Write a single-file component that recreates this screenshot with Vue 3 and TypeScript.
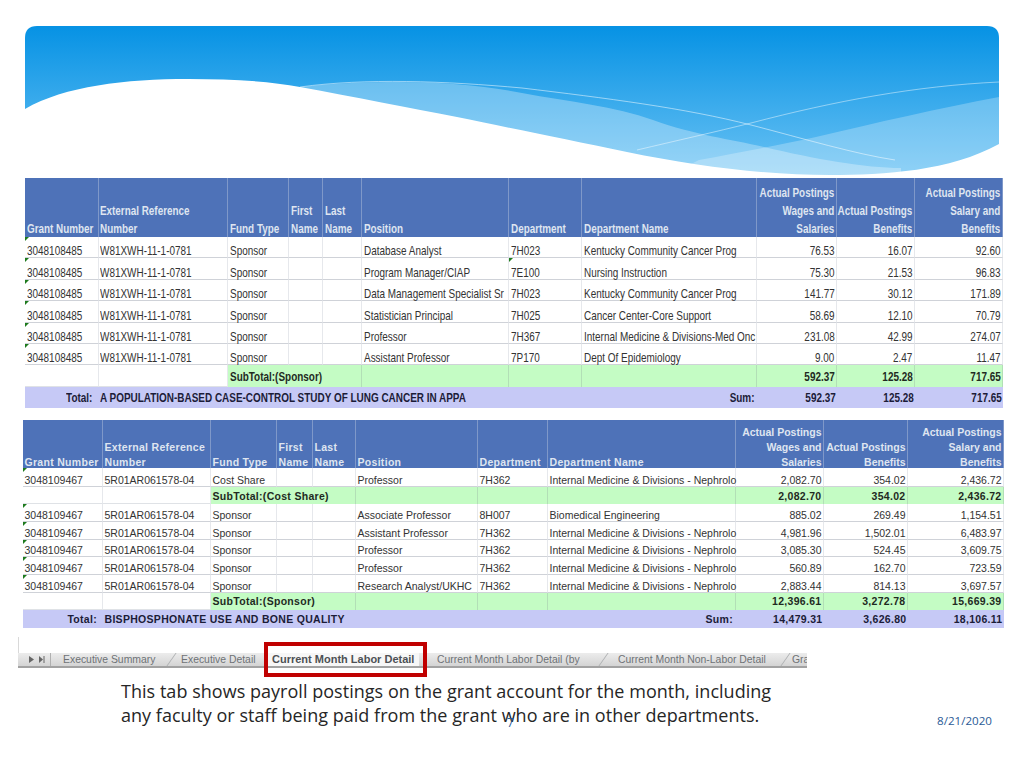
<script setup lang="ts">
type Row = { kind: 'head' | 'data' | 'sub' | 'total'; cells: string[]; marks?: number[] }
type Table = { cls: string; rows: Row[] }

const head = (cols: string[]): Row => ({ kind: 'head', cells: cols })
const headCells = [
  'Grant Number', 'External Reference\nNumber', 'Fund Type', 'First\nName', 'Last\nName', 'Position',
  'Department', 'Department Name', 'Actual Postings\nWages and\nSalaries', 'Actual Postings\nBenefits',
  'Actual Postings\nSalary and\nBenefits',
]
const d1 = (pos: string, dep: string, name: string, a: string, b: string, c: string, marks: number[] = [0]): Row => ({
  kind: 'data',
  cells: ['3048108485', 'W81XWH-11-1-0781', 'Sponsor', '', '', pos, dep, name, a, b, c],
  marks,
})
const d2 = (fund: string, pos: string, dep: string, name: string, a: string, b: string, c: string): Row => ({
  kind: 'data',
  cells: ['3048109467', '5R01AR061578-04', fund, '', '', pos, dep, name, a, b, c],
  marks: [0],
})
const sub = (label: string, a: string, b: string, c: string): Row => ({
  kind: 'sub',
  cells: ['', '', label, '', '', '', '', '', a, b, c],
})
const total = (title: string, a: string, b: string, c: string): Row => ({
  kind: 'total',
  cells: ['Total:', title, '', '', '', '', '', 'Sum:', a, b, c],
})
const neph = 'Internal Medicine & Divisions - Nephrolo'

const tables: Table[] = [
  {
    cls: 't1',
    rows: [
      head(headCells),
      d1('Database Analyst', '7H023', 'Kentucky Community Cancer Prog', '76.53', '16.07', '92.60'),
      d1('Program Manager/CIAP', '7E100', 'Nursing Instruction', '75.30', '21.53', '96.83', [0, 6]),
      d1('Data Management Specialist Sr', '7H023', 'Kentucky Community Cancer Prog', '141.77', '30.12', '171.89'),
      d1('Statistician Principal', '7H025', 'Cancer Center-Core Support', '58.69', '12.10', '70.79'),
      d1('Professor', '7H367', 'Internal Medicine & Divisions-Med Onc', '231.08', '42.99', '274.07'),
      d1('Assistant Professor', '7P170', 'Dept Of Epidemiology', '9.00', '2.47', '11.47'),
      sub('SubTotal:(Sponsor)', '592.37', '125.28', '717.65'),
      total('A POPULATION-BASED CASE-CONTROL STUDY OF LUNG CANCER IN APPA', '592.37', '125.28', '717.65'),
    ],
  },
  {
    cls: 't2',
    rows: [
      head(headCells),
      d2('Cost Share', 'Professor', '7H362', neph, '2,082.70', '354.02', '2,436.72'),
      sub('SubTotal:(Cost Share)', '2,082.70', '354.02', '2,436.72'),
      d2('Sponsor', 'Associate Professor', '8H007', 'Biomedical Engineering', '885.02', '269.49', '1,154.51'),
      d2('Sponsor', 'Assistant Professor', '7H362', neph, '4,981.96', '1,502.01', '6,483.97'),
      d2('Sponsor', 'Professor', '7H362', neph, '3,085.30', '524.45', '3,609.75'),
      d2('Sponsor', 'Professor', '7H362', neph, '560.89', '162.70', '723.59'),
      d2('Sponsor', 'Research Analyst/UKHC', '7H362', neph, '2,883.44', '814.13', '3,697.57'),
      sub('SubTotal:(Sponsor)', '12,396.61', '3,272.78', '15,669.39'),
      total('BISPHOSPHONATE USE AND BONE QUALITY', '14,479.31', '3,626.80', '18,106.11'),
    ],
  },
]

function cellClass(row: Row, i: number): Record<string, boolean> {
  return {
    right: i >= 8 || (row.kind === 'total' && (i === 0 || i === 7)),
    green: row.kind === 'sub' && i >= 2,
    open: row.kind === 'sub' && (i === 2 || i === 3),
    mark: (row.marks ?? []).includes(i),
    lead: row.kind === 'total' && i === 0,
    sum: row.kind === 'total' && i === 7,
  }
}

const tabs = [
  { label: 'Executive Summary', cls: 's1' },
  { label: 'Executive Detail', cls: '' },
  { label: 'Current Month Labor Detail', cls: 'active' },
  { label: 'Current Month Labor Detail (by', cls: 's2' },
  { label: 'Current Month Non-Labor Detail', cls: 's3' },
  { label: 'Gra', cls: '' },
]
</script>

<template>
  <div class="slide">
    <svg class="banner" viewBox="0 0 974 152" width="974" height="152" aria-hidden="true">
      <defs>
        <linearGradient id="sky" x1="0" y1="0" x2="0" y2="1">
          <stop offset="0" stop-color="#0692e4" />
          <stop offset="1" stop-color="#6cc3f4" />
        </linearGradient>
      </defs>
      <path d="M12 0H962Q974 0 974 12V152H0V12Q0 0 12 0Z" fill="url(#sky)" />
      <path d="M275 61C310 57 345 56 373 56C420 56 460 60 497 67C545 76 590 80 628 94C670 109 705 113 739 121C790 133 840 142 876 142L876 152H275Z" fill="#fff" opacity=".3" />
      <path d="M650 146L674 134C715 126 750 120 791 111C850 97 915 82 974 71V152H650Z" fill="#fff" opacity=".25" />
      <path d="M275 61C340 52 420 55 497 62C580 72 660 82 726 99C780 113 830 128 870 134" fill="none" stroke="#fff" stroke-opacity=".5" />
      <path d="M612 124C650 115 690 106 726 97C810 75 890 60 974 56" fill="none" stroke="#fff" stroke-opacity=".45" />
      <path d="M0 83C40 60 100 53 164 53C205 53 245 55 275 61C330 71 385 82 432 91C480 101 540 113 602 126C670 140 740 149 805 149C860 149 925 145 974 118V152H0Z" fill="#fff" />
    </svg>

    <div v-for="t in tables" :key="t.cls" class="sheet" :class="t.cls">
      <template v-for="(row, r) in t.rows" :key="r">
        <div
          v-for="(cell, i) in row.cells"
          :key="i"
          class="cell"
          :class="[row.kind, cellClass(row, i)]"
        >
          <span class="txt">{{ cell }}</span>
        </div>
      </template>
    </div>

    <div class="strip">
      <div class="nav">
        <svg width="20" height="9" viewBox="0 0 20 9" aria-hidden="true">
          <path d="M3 1l5 3.5L3 8z" fill="#666" />
          <path d="M13 1l4 3.5L13 8z" fill="#666" />
          <path d="M18 1v7" stroke="#666" />
        </svg>
      </div>
      <div v-for="tab in tabs" :key="tab.label" class="tab" :class="tab.cls">{{ tab.label }}</div>
      <div class="redbox"></div>
    </div>

    <p class="caption">
      This tab shows payroll postings on the grant account for the month, including<br />
      any faculty or staff being paid from the grant who are in other departments.
    </p>
    <div class="num">7</div>
    <div class="date">8/21/2020</div>
  </div>
</template>

<style scoped>
.slide {
  position: relative;
  width: 1024px;
  height: 768px;
  overflow: hidden;
  background: #fff;
  padding-top: 26px;
  box-sizing: border-box;
  font-family: "Liberation Sans", Arial, sans-serif;
}
.banner {
  display: block;
  margin-left: 25px;
}
.sheet {
  display: grid;
  color: #333;
}
.t1 {
  margin-left: 25px;
  grid-template-columns: 73.5px 129.5px 61px 34px 39px 147px 73px 175px 80px 78px 88px;
  grid-template-rows: 59px repeat(8, 21.4px);
  font-size: 13px;
  --sx: 0.765;
  --shead: 0.76;
  --hline: 18px;
  --hspace: 0;
  --sspace: 0;
  --dropdata: -1px;
  --drophead: -1px;
}
.t2 {
  margin-left: 23px;
  margin-top: 12px;
  grid-template-columns: 80px 108px 66px 36px 43px 122px 70px 188px 88px 84px 96px;
  grid-template-rows: 48px 19px 17px 18px 17.5px 17.5px 17.5px 18px 17px 18px;
  font-size: 10.5px;
  --sx: 1;
  --shead: 1;
  --hline: 14.6px;
  --hspace: 0.3px;
  --sspace: 0.3px;
  --dropdata: 0px;
  --drophead: -1px;
}
.cell {
  position: relative;
  display: flex;
  align-items: flex-end;
  box-sizing: border-box;
  padding: 0 1.5px;
  min-width: 0;
  border-right: 1px solid #e6e8ec;
  border-bottom: 1px solid #cfd2d8;
}
.txt {
  position: relative;
  z-index: 1;
  display: inline-block;
  white-space: pre;
  margin-bottom: var(--dropdata);
  transform: scaleX(var(--sx));
  transform-origin: left center;
}
.right {
  justify-content: flex-end;
  text-align: right;
}
.right .txt {
  transform-origin: right center;
}
.head {
  background: #4e72b8;
  color: #dfe5f0;
  font-weight: 700;
  line-height: var(--hline);
  border-right-color: #7f98c9;
  border-bottom: 0;
}
.head .txt {
  letter-spacing: var(--hspace);
  margin-bottom: var(--drophead);
  transform: scaleX(var(--shead));
}
.head.right .txt {
  letter-spacing: 0;
}
.sub,
.total {
  font-weight: 700;
  color: #1f2a1f;
  align-items: center;
}
.sub .txt,
.total .txt {
  margin-bottom: 0;
  letter-spacing: var(--sspace);
}
.sub {
  border-bottom-color: #dfe2e6;
}
.sub.green {
  background: #c4fcc4;
  border-bottom: 0;
  border-right-color: #b2dfb6;
}
.sub.open {
  border-right-color: transparent;
}
.total {
  background: #c6c9f6;
  border: 0;
  color: #1c1c38;
}
.lead {
  padding-right: 6px;
}
.sum {
  padding-right: 3px;
}
.mark::before {
  content: "";
  position: absolute;
  left: 0;
  top: 0;
  border-top: 4px solid #1e7b1e;
  border-right: 4px solid transparent;
}
.strip {
  position: relative;
  isolation: isolate;
  display: grid;
  grid-template-columns: 45px 118px 91px 165px 181px 174px 15px;
  align-items: center;
  margin: 25px 0 0 18px;
  width: 789px;
  height: 15px;
  box-sizing: border-box;
  background: linear-gradient(#ececec, #d4d4d4);
  border-bottom: 2px solid #a2a2a2;
  font-size: 10.4px;
  color: #6e7276;
}
.strip::before {
  content: "";
  position: absolute;
  left: 0;
  top: -16px;
  height: 16px;
  border-left: 1px solid #d9d9d9;
}
.nav {
  display: flex;
  align-items: center;
  padding-left: 8px;
  height: 13px;
  position: relative;
}
.nav::after {
  content: "";
  position: absolute;
  left: 32px;
  top: 0;
  height: 13px;
  border-left: 1px solid #b0b0b0;
}
.tab {
  position: relative;
  white-space: nowrap;
  overflow: hidden;
  line-height: 13px;
}
.active {
  overflow: visible;
  font-size: 11px;
  font-weight: 700;
  color: #4d5155;
}
.active::before {
  content: "";
  position: absolute;
  z-index: -1;
  left: -5px;
  top: 0;
  width: 152px;
  height: 13px;
  background: #f7f7f7;
}
.s1::after,
.s2::after,
.s3::after {
  content: "";
  position: absolute;
  top: 0;
  height: 13px;
  border-left: 1px solid #aeb0b2;
  transform: skewX(-35deg);
}
.s1::after { right: 9px; }
.s2::after { right: 14px; }
.s3::after { right: 6px; }
.redbox {
  position: absolute;
  left: 246px;
  top: -11px;
  width: 163px;
  height: 35px;
  box-sizing: border-box;
  border: 4px solid #c00000;
}
.caption {
  margin: 11px 0 0 121px;
  font-family: "Open Sans", sans-serif;
  font-size: 18px;
  letter-spacing: 0.03px;
  line-height: 24px;
  color: #262626;
  white-space: nowrap;
}
.num {
  position: absolute;
  left: 507px;
  top: 715px;
  font-family: "Open Sans", sans-serif;
  font-size: 12px;
  line-height: 16px;
  color: #2a5a96;
}
.date {
  position: absolute;
  left: 937px;
  top: 713px;
  font-family: "Open Sans", sans-serif;
  font-size: 11.6px;
  line-height: 16px;
  color: #2a5a96;
}
</style>
